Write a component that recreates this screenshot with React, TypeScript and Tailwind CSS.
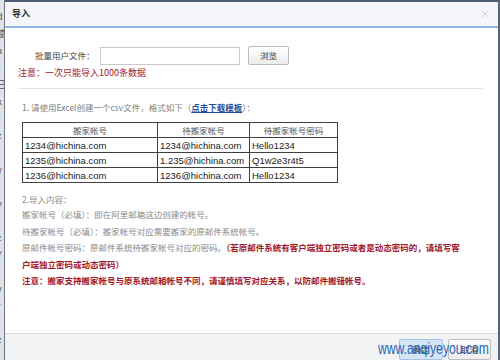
import { X } from 'lucide-react';

const cjk = { fontFamily: '"Noto Sans CJK SC", "Liberation Sans", sans-serif' };
const latin = { fontFamily: '"Liberation Sans", "Noto Sans CJK SC", sans-serif' };

const rows = [
  ['1234@hichina.com', '1234@hichina.com', 'Hello1234'],
  ['1235@hichina.com', '1.235@hichina.com', 'Q1w2e3r4t5'],
  ['1236@hichina.com', '1236@hichina.com', 'Hello1234'],
];

const sideChars = ['d', '使', 'a', 't', '已', 'k', 'f', 'z', 't', 'y', '(', 'v', 'l', 'z', 'Y', 't', 'v', 'r', 'j', 'z'];

function App() {
  return (
    <div className="relative flex h-[360px] w-[500px] overflow-hidden bg-[#5c6472]" style={cjk}>
      {/* page behind the dialog */}
      <div className="flex w-[5px] flex-col overflow-hidden border-r border-[#6f7682] bg-[#dfe2e6] pt-[8px]">
        {sideChars.map((c, i) => (
          <span key={i} className="-ml-[3px] h-[17px] text-[9px] leading-[17px] text-[#555]">
            {c}
          </span>
        ))}
      </div>

      <div className="flex w-[493px] flex-col bg-white">
        <div className="h-[2px] bg-[#4e5d76]" />
        <div className="flex h-[26px] items-center justify-between border-b-2 border-[#8fb4e0] bg-[#f4f6f9] pl-[7px] pr-[8px]">
          <span className="text-[9px] font-bold text-[#333]">导入</span>
          <X className="h-[10px] w-[10px] text-[#b5b8bd]" strokeWidth={1.5} />
        </div>

        <div className="flex flex-1 flex-col pl-[13px] pr-[15px]">
          <div className="mt-[18px] flex h-[19px] items-center">
            <span className="ml-[17px] w-[65px] text-[8.5px] text-[#444]">批量用户文件：</span>
            <div className="h-[18px] w-[140px] border border-[#c9c9c9] bg-white" />
            <div className="ml-[8px] flex h-[19px] w-[41px] items-center justify-center rounded-[2px] border border-[#bcbcbc] bg-gradient-to-b from-white to-[#ececec] text-[8.5px] text-[#333]">
              浏览
            </div>
          </div>
          <div className="mt-[1px] h-[14px] text-[9px] leading-[14px] text-[#a3172b]">注意：一次只能导入1000条数据</div>
          <div className="mt-[8px] h-px bg-[#e4e4e4]" />

          <div className="ml-[4px] mt-[11px] h-[14px] whitespace-nowrap text-[8.5px] leading-[14px] text-[#7f7f7f]">
            1. 请使用Excel创建一个csv文件，格式如下（
            <span className="font-bold text-[#1d4f9e] underline">点击下载模板</span>）：
          </div>

          <table className="ml-[4px] mt-[8px] w-[316px] border-collapse border border-[#3f3f3f]" style={latin}>
            <thead>
              <tr className="h-[15px]">
                <th className="w-[135px] border border-[#3f3f3f] p-0 text-[8.5px] font-normal text-[#555]" style={cjk}>搬家帐号</th>
                <th className="w-[92px] border border-[#3f3f3f] p-0 text-[8.5px] font-normal text-[#555]" style={cjk}>待搬家帐号</th>
                <th className="border border-[#3f3f3f] p-0 text-[8.5px] font-normal text-[#555]" style={cjk}>待搬家帐号密码</th>
              </tr>
            </thead>
            <tbody>
              {rows.map((r, i) => (
                <tr key={i} className="h-[15px]">
                  {r.map((c, j) => (
                    <td key={j} className="border border-[#3f3f3f] py-0 pl-[2px] text-[9.5px] leading-[13px] text-[#222]">
                      {c}
                    </td>
                  ))}
                </tr>
              ))}
            </tbody>
          </table>

          <div className="ml-[4px] mt-[9px] h-[14px] text-[8.5px] leading-[14px] text-[#8a8a8a]">2.导入内容：</div>
          <div className="ml-[4px] whitespace-nowrap text-[8.5px] leading-[16.5px] text-[#8a8a8a]">
            <div>搬家帐号（必填）：即在阿里邮箱这边创建的帐号。</div>
            <div>待搬家帐号（必填）：搬家帐号对应需要搬家的原邮件系统帐号。</div>
            <div>
              原邮件帐号密码：原邮件系统待搬家帐号对应的密码。
              <span className="font-bold text-[#a3172b]">（若原邮件系统有客户端独立密码或者是动态密码的，请填写客</span>
            </div>
            <div className="font-bold text-[#a3172b]">户端独立密码或动态密码）</div>
            <div className="font-bold text-[#a3172b]">注意：搬家支持搬家帐号与原系统邮箱帐号不同，请谨慎填写对应关系，以防邮件搬错帐号。</div>
          </div>
        </div>

        <div className="flex h-[27px] justify-end gap-[5px] border-t border-[#dcdcdc] bg-[#f2f3f5] pr-[7px] pt-[5px]">
          <div className="flex h-[21px] w-[44px] items-center justify-center rounded-[2px] border border-[#a9c3e4] bg-[#d6e5f6] text-[8.5px] text-[#333]">
            确定
          </div>
          <div className="flex h-[21px] w-[43px] items-center justify-center rounded-[2px] border border-[#bdbdbd] bg-gradient-to-b from-white to-[#eeeeee] text-[8.5px] text-[#333]">
            取消
          </div>
        </div>
      </div>

      {/* watermark */}
      <div
        className="absolute left-[378px] top-[340px] origin-left scale-x-[0.76] whitespace-nowrap text-[16px] leading-[18px] text-[#1f63b6]"
        style={latin}
      >
        www.anqiyeyou.com
      </div>
    </div>
  );
}

export default App;
